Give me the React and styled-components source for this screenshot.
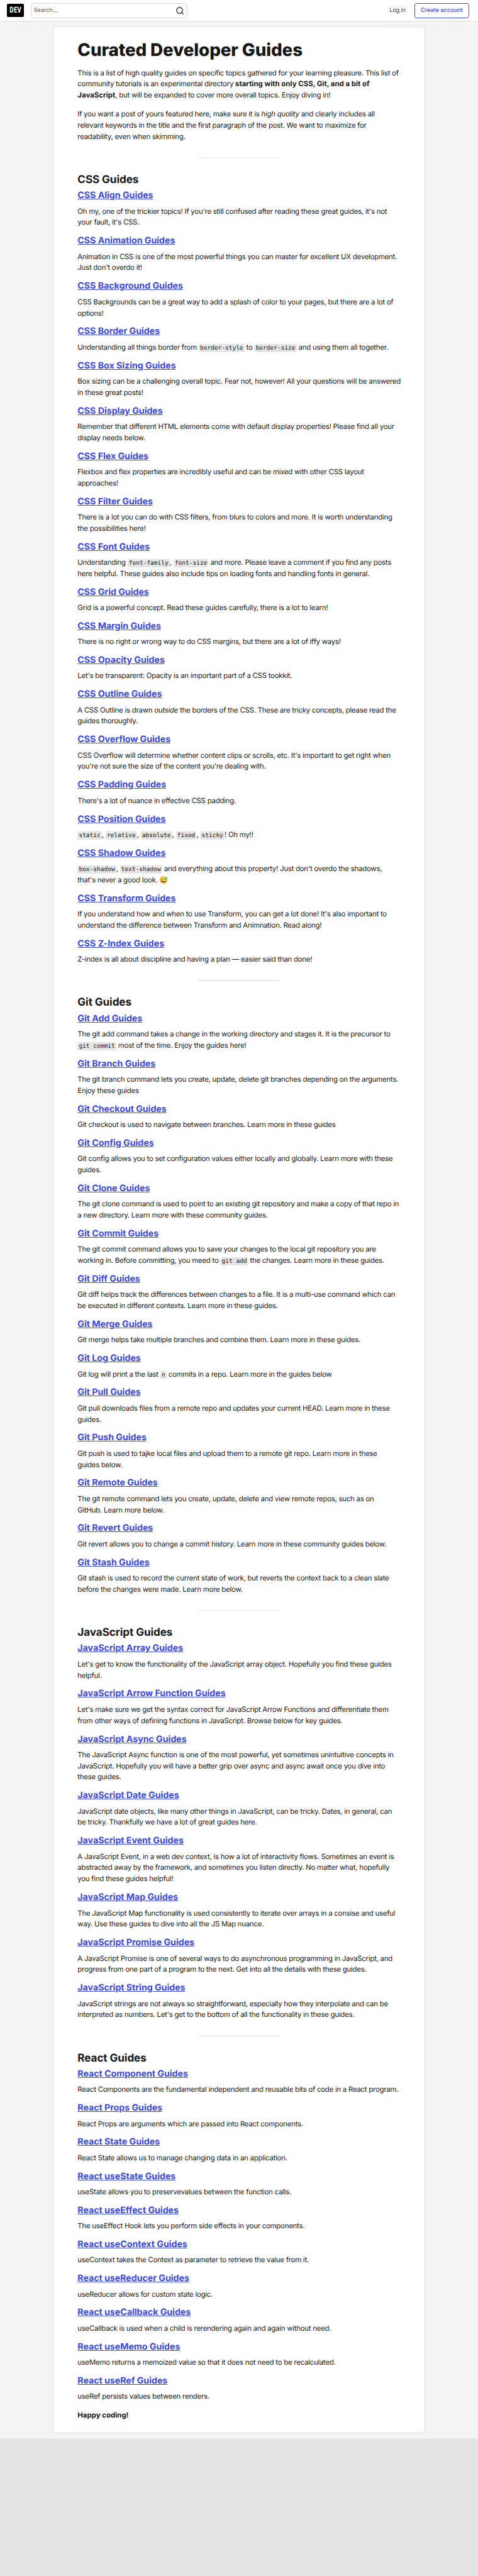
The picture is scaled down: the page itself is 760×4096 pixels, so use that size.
import React from 'react';
import styled, { createGlobalStyle } from 'styled-components';

const px = (n) => `${n / 16}rem`;

const GlobalStyle = createGlobalStyle`
  html { font-size: 9.506px; }
  body {
    margin: 0;
    background: #e4e4e4;
    color: #171717;
    font-family: Inter, 'Liberation Sans', sans-serif;
    text-rendering: geometricPrecision;
  }
  *, *::before, *::after { box-sizing: border-box; }
`;

const Page = styled.div`
  display: flex;
  flex-direction: column;
`;

const Header = styled.header`
  display: flex;
  align-items: center;
  height: ${px(56)};
  padding: 0 ${px(24)} 0 ${px(18)};
  background: #fff;
  box-shadow: 0 1px 0 rgba(0, 0, 0, 0.1);
  z-index: 1;
`;

const Logo = styled.a`
  display: flex;
  align-items: center;
  justify-content: center;
  width: ${px(46)};
  height: ${px(36)};
  margin-right: ${px(18)};
  border-radius: ${px(3)};
  background: #000;
  color: #fff;
  text-decoration: none;
`;

const LogoText = styled.span`
  font-family: Roboto, sans-serif;
  font-size: ${px(22)};
  font-weight: 700;
  line-height: 1;
  letter-spacing: 0.03em;
  transform: scaleX(0.74);
`;

const SearchBox = styled.div`
  display: flex;
  align-items: center;
  justify-content: space-between;
  width: ${px(420)};
  height: ${px(40)};
  padding: 0 ${px(7)};
  border: 1px solid #d6d6d6;
  border-radius: ${px(6)};
  background: #fff;
  color: #575757;
  font-size: ${px(15.4)};
  letter-spacing: -0.01em;
`;

const SearchIcon = styled.svg`
  width: ${px(24)};
  height: ${px(24)};
  fill: #242424;
`;

const Actions = styled.nav`
  display: flex;
  align-items: center;
  gap: ${px(24)};
  margin-left: auto;
`;

const LoginLink = styled.a`
  color: #404040;
  font-size: ${px(15.4)};
  letter-spacing: -0.015em;
`;

const CreateButton = styled.a`
  display: flex;
  align-items: center;
  justify-content: center;
  width: ${px(146)};
  height: ${px(40)};
  border: 1px solid #3b49df;
  border-radius: ${px(6)};
  color: #3b49df;
  font-size: ${px(15.4)};
  font-weight: 500;
`;

const Main = styled.main`
  padding: ${px(16)} ${px(143.6)};
  background: #f4f4f4;
`;

const Card = styled.article`
  padding: ${px(33)} ${px(64)} ${px(31)};
  border-radius: ${px(6)};
  background: #fff;
  box-shadow: 0 0 0 1px rgba(23, 23, 23, 0.1);
`;

const Title = styled.h1`
  margin: 0 0 ${px(16.2)};
  font-size: ${px(46.8)};
  font-weight: 800;
  line-height: ${px(60)};
  letter-spacing: -0.004em;
`;

const Paragraph = styled.p`
  margin: 0;
  font-size: ${px(19.25)};
  line-height: ${px(30)};
  letter-spacing: -0.022em;
  white-space: pre;

  & + & { margin-top: ${px(20.2)}; }
`;

const Line = styled.span`
  display: block;
  height: ${px(30)};
`;

const Strong = styled.strong`
  font-weight: 700;
  letter-spacing: 0;
`;

const Code = styled.code`
  padding: ${px(1.5)} ${px(3.5)} ${px(2)};
  border-radius: ${px(4)};
  background: #e5e5e5;
  font-family: 'DejaVu Sans Mono', monospace;
  font-size: ${px(16)};
  line-height: 1;
  letter-spacing: 0;
`;

const Divider = styled.hr`
  width: 25%;
  height: ${px(2)};
  margin: ${px(39.6)} auto ${px(40)};
  border: 0;
  background: #e5e5e5;
`;

const SectionTitle = styled.h2`
  margin: 0 0 ${px(8.6)};
  font-size: ${px(28.8)};
  font-weight: 700;
  line-height: ${px(37.5)};
  letter-spacing: -0.005em;
`;

const Guide = styled.section`
  & + & { margin-top: ${px(18.62)}; }
`;

const GuideTitle = styled.h3`
  margin: 0 0 ${px(11.4)};
  font-size: ${px(24)};
  font-weight: 700;
  line-height: ${px(31.25)};
  letter-spacing: -0.004em;
`;

const GuideLink = styled.a`
  color: #3b49df;
  text-decoration: underline;
`;

const Closing = styled.div`
  margin-top: ${px(20)};
`;

const sections = [
  {
    title: 'CSS Guides',
    guides: [
      ['CSS Align Guides', "Oh my, one of the trickier topics! If you're still confused after reading these great guides, it's not\nyour fault, it's CSS."],
      ['CSS Animation Guides', "Animation in CSS is one of the most powerful things you can master for excellent UX development.\nJust don't overdo it!"],
      ['CSS Background Guides', 'CSS Backgrounds can be a great way to add a splash of color to your pages, but there are a lot of\noptions!'],
      ['CSS Border Guides', 'Understanding all things border from `border-style` to `border-size` and using them all together.'],
      ['CSS Box Sizing Guides', 'Box sizing can be a challenging overall topic. Fear not, however! All your questions will be answered\nin these great posts!'],
      ['CSS Display Guides', 'Remember that different HTML elements come with default display properties! Please find all your\ndisplay needs below.'],
      ['CSS Flex Guides', 'Flexbox and flex properties are incredibly useful and can be mixed with other CSS layout\napproaches!'],
      ['CSS Filter Guides', 'There is a lot you can do with CSS filters, from blurs to colors and more. It is worth understanding\nthe possibilities here!'],
      ['CSS Font Guides', 'Understanding `font-family`, `font-size` and more. Please leave a comment if you find any posts\nhere helpful. These guides also include tips on loading fonts and handling fonts in general.'],
      ['CSS Grid Guides', 'Grid is a powerful concept. Read these guides carefully, there is a lot to learn!'],
      ['CSS Margin Guides', 'There is no right or wrong way to do CSS margins, but there are a lot of iffy ways!'],
      ['CSS Opacity Guides', "Let's be transparent: Opacity is an important part of a CSS tookkit."],
      ['CSS Outline Guides', 'A CSS Outline is drawn _outside_ the borders of the CSS. These are tricky concepts, please read the\nguides thoroughly.'],
      ['CSS Overflow Guides', "CSS Overflow will determine whether content clips or scrolls, etc. It's important to get right when\nyou're not sure the size of the content you're dealing with."],
      ['CSS Padding Guides', "There's a lot of nuance in effective CSS padding."],
      ['CSS Position Guides', '`static`, `relative`, `absolute`, `fixed`, `sticky`! Oh my!!'],
      ['CSS Shadow Guides', "`box-shadow`, `text-shadow` and everything about this property! Just don't overdo the shadows,\nthat's never a good look. 😅"],
      ['CSS Transform Guides', "If you understand how and when to use Transform, you can get a lot done! It's also important to\nunderstand the difference between Transform and Animnation. Read along!"],
      ['CSS Z-Index Guides', 'Z-index is all about discipline and having a plan — easier said than done!'],
    ],
  },
  {
    title: 'Git Guides',
    guides: [
      ['Git Add Guides', 'The git add command takes a change in the working directory and stages it. It is the precursor to\n`git commit` most of the time. Enjoy the guides here!'],
      ['Git Branch Guides', 'The git branch command lets you create, update, delete git branches depending on the arguments.\nEnjoy these guides'],
      ['Git Checkout Guides', 'Git checkout is used to navigate between branches. Learn more in these guides'],
      ['Git Config Guides', 'Git config allows you to set configuration values either locally and globally. Learn more with these\nguides.'],
      ['Git Clone Guides', 'The git clone command is used to point to an existing git repository and make a copy of that repo in\na new directory. Learn more with these community guides.'],
      ['Git Commit Guides', 'The git commit command allows you to save your changes to the local git repository you are\nworking in. Before committing, you meed to `git add` the changes. Learn more in these guides.'],
      ['Git Diff Guides', 'Git diff helps track the differences between changes to a file. It is a multi-use command which can\nbe executed in different contexts. Learn more in these guides.'],
      ['Git Merge Guides', 'Git merge helps take multiple branches and combine them. Learn more in these guides.'],
      ['Git Log Guides', 'Git log will print a the last `n` commits in a repo. Learn more in the guides below'],
      ['Git Pull Guides', 'Git pull downloads files from a remote repo and updates your current HEAD. Learn more in these\nguides.'],
      ['Git Push Guides', 'Git push is used to tajke local files and upload them to a remote git repo. Learn more in these\nguides below.'],
      ['Git Remote Guides', 'The git remote command lets you create, update, delete and view remote repos, such as on\nGitHub. Learn more below.'],
      ['Git Revert Guides', 'Git revert allows you to change a commit history. Learn more in these community guides below.'],
      ['Git Stash Guides', 'Git stash is used to record the current state of work, but reverts the context back to a clean slate\nbefore the changes were made. Learn more below.'],
    ],
  },
  {
    title: 'JavaScript Guides',
    guides: [
      ['JavaScript Array Guides', "Let's get to know the functionality of the JavaScript array object. Hopefully you find these guides\nhelpful."],
      ['JavaScript Arrow Function Guides', "Let's make sure we get the syntax correct for JavaScript Arrow Functions and differentiate them\nfrom other ways of defining functions in JavaScript. Browse below for key guides."],
      ['JavaScript Async Guides', 'The JavaScript Async function is one of the most powerful, yet sometimes unintuitive concepts in\nJavaScript. Hopefully you will have a better grip over async and async await once you dive into\nthese guides.'],
      ['JavaScript Date Guides', 'JavaScript date objects, like many other things in JavaScript, can be tricky. Dates, in general, can\nbe tricky. Thankfully we have a lot of great guides here.'],
      ['JavaScript Event Guides', 'A JavaScript Event, in a web dev context, is how a lot of interactivity flows. Sometimes an event is\nabstracted away by the framework, and sometimes you listen directly. No matter what, hopefully\nyou find these guides helpful!'],
      ['JavaScript Map Guides', 'The JavaScript Map functionality is used consistently to iterate over arrays in a consise and useful\nway. Use these guides to dive into all the JS Map nuance.'],
      ['JavaScript Promise Guides', 'A JavaScript Promise is one of several ways to do asynchronous programming in JavaScript, and\nprogress from one part of a program to the next. Get into all the details with these guides.'],
      ['JavaScript String Guides', "JavaScript strings are not always so straightforward, especially how they interpolate and can be\ninterpreted as numbers. Let's get to the bottom of all the functionality in these guides."],
    ],
  },
  {
    title: 'React Guides',
    guides: [
      ['React Component Guides', 'React Components are the fundamental independent and reusable bits of code in a React program.'],
      ['React Props Guides', 'React Props are arguments which are passed into React components.'],
      ['React State Guides', 'React State allows us to manage changing data in an application.'],
      ['React useState Guides', 'useState allows you to preservevalues between the function calls.'],
      ['React useEffect Guides', 'The useEffect Hook lets you perform side effects in your components.'],
      ['React useContext Guides', 'useContext takes the Context as parameter to retrieve the value from it.'],
      ['React useReducer Guides', 'useReducer allows for custom state logic.'],
      ['React useCallback Guides', 'useCallback is used when a child is rerendering again and again without need.'],
      ['React useMemo Guides', 'useMemo returns a memoized value so that it does not need to be recalculated.'],
      ['React useRef Guides', 'useRef persists values between renders.'],
    ],
  },
];

// Inline marks: `code`, *strong*, _emphasis_
function inline(text) {
  return text.split(/(`[^`]+`|\*[^*]+\*|_[^_]+_)/).map((part, i) => {
    const inner = part.slice(1, -1);
    if (part[0] === '`') return <Code key={i}>{inner}</Code>;
    if (part[0] === '*') return <Strong key={i}>{inner}</Strong>;
    if (part[0] === '_') return <em key={i}>{inner}</em>;
    return part;
  });
}

function RichText({ text }) {
  return (
    <Paragraph>
      {text.split('\n').map((line) => (
        <Line key={line}>{inline(line)}</Line>
      ))}
    </Paragraph>
  );
}

export default function App() {
  return (
    <Page>
      <GlobalStyle />
      <Header>
        <Logo><LogoText>DEV</LogoText></Logo>
        <SearchBox>
          Search...
          <SearchIcon viewBox="0 0 24 24">
            <path d="M18.031 16.617l4.283 4.282-1.415 1.415-4.282-4.283A8.96 8.96 0 0 1 11 20c-4.968 0-9-4.032-9-9s4.032-9 9-9 9 4.032 9 9a8.96 8.96 0 0 1-1.969 5.617zm-2.006-.742A6.977 6.977 0 0 0 18 11c0-3.868-3.133-7-7-7-3.868 0-7 3.132-7 7 0 3.867 3.132 7 7 7a6.977 6.977 0 0 0 4.875-1.975l.15-.15z" />
          </SearchIcon>
        </SearchBox>
        <Actions>
          <LoginLink>Log in</LoginLink>
          <CreateButton>Create account</CreateButton>
        </Actions>
      </Header>
      <Main>
        <Card>
          <Title>Curated Developer Guides</Title>
          <RichText text={'This is a list of high quality guides on specific topics gathered for your learning pleasure. This list of\ncommunity tutorials is an experimental directory *starting with only CSS, Git, and a bit of*\n*JavaScript*, but will be expanded to cover more overall topics. Enjoy diving in!'} />
          <RichText text={'If you want a post of yours featured here, make sure it is _high quality_ and clearly includes all\nrelevant keywords in the title and the first paragraph of the post. We want to maximize for\nreadability, even when skimming.'} />
          {sections.map((section) => (
            <React.Fragment key={section.title}>
              <Divider />
              <SectionTitle>{section.title}</SectionTitle>
              {section.guides.map(([title, text]) => (
                <Guide key={title}>
                  <GuideTitle><GuideLink>{title}</GuideLink></GuideTitle>
                  <RichText text={text} />
                </Guide>
              ))}
            </React.Fragment>
          ))}
          <Closing>
            <RichText text="*Happy coding!*" />
          </Closing>
        </Card>
      </Main>
    </Page>
  );
}
